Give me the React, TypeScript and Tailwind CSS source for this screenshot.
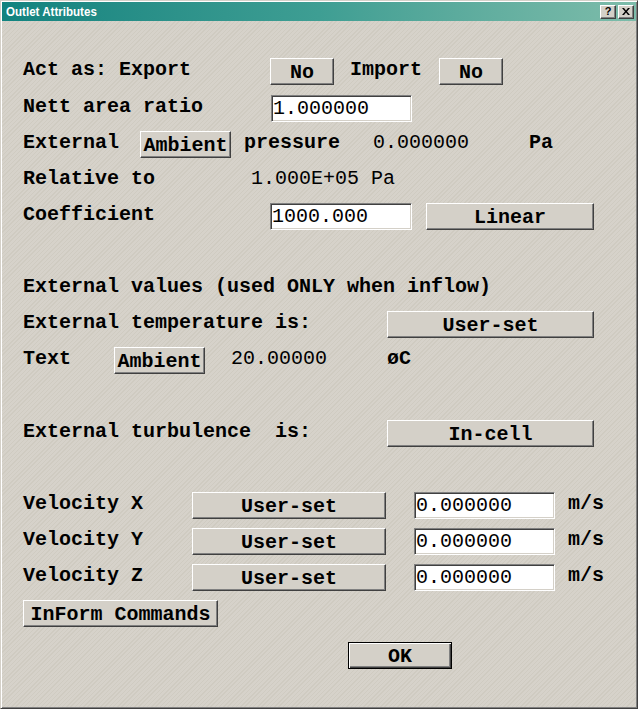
import React from "react";

const mono = "font-['Liberation_Mono','Courier_New',monospace]";

function Btn({ w, children, def = false, bold = true }: { w: number; children: React.ReactNode; def?: boolean; bold?: boolean }) {
  return (
    <div
      className={
        "h-[27px] shrink-0 flex items-center justify-center text-[20px] leading-[23px] text-black bg-[#d4d0c8] " +
        (bold ? "font-bold " : "") +
        (def
          ? "border border-black shadow-[inset_1px_1px_#ffffff,inset_-1px_-1px_#404040,inset_-2px_-2px_#808080]"
          : "border border-t-white border-l-white border-r-[#404040] border-b-[#404040] shadow-[inset_-1px_-1px_#808080]")
      }
      style={{ width: w }}
    >
      <span className="pt-[1px]">{children}</span>
    </div>
  );
}

function Input({ w, value }: { w: number; value: string }) {
  return (
    <div
      className="h-[27px] shrink-0 flex items-center bg-white border border-t-[#808080] border-l-[#808080] border-b-white border-r-white shadow-[inset_1px_1px_#404040,inset_-1px_-1px_#d4d0c8] pl-[1px] text-[20px] leading-[20px] text-black"
      style={{ width: w }}
    >
      {value}
    </div>
  );
}

function L({ w, children, normal = false }: { w?: number; children: React.ReactNode; normal?: boolean }) {
  return (
    <div
      className={"shrink-0 whitespace-pre text-[20px] leading-[23px] text-black " + (normal ? "font-normal" : "font-bold")}
      style={w ? { width: w } : undefined}
    >
      {children}
    </div>
  );
}

function Row({ mt, children }: { mt: number; children: React.ReactNode }) {
  return (
    <div className="flex items-start h-[27px]" style={{ marginTop: mt }}>
      {children}
    </div>
  );
}

export default function App() {
  return (
    <div
      className={
        "w-[638px] h-[709px] relative flex flex-col border border-t-[#d4d0c8] border-l-[#d4d0c8] border-r-[#404040] border-b-[#404040] shadow-[inset_1px_1px_#ffffff,inset_-1px_-1px_#808080] p-[1px] bg-[#d4d0c8] bg-[repeating-linear-gradient(135deg,#d6d2ca_0px,#d6d2ca_2px,#cfcbc1_2px,#cfcbc1_3px)] " +
        mono
      }
    >
      {/* title bar */}
      <div className="h-[19px] shrink-0 flex items-center bg-linear-to-r from-[#10837f] via-[#3e9e93] to-[#7dbcaa] pl-[4px] pr-[2px]">
        <span className="font-['Liberation_Sans',Arial,sans-serif] font-bold text-[13px] leading-[15px] text-white origin-left scale-x-[0.89] whitespace-nowrap">
          Outlet Attributes
        </span>
        <div className="ml-auto flex items-center gap-[2px]">
          <div className="w-[16px] h-[14px] bg-[#d4d0c8] border border-t-white border-l-white border-r-[#404040] border-b-[#404040] shadow-[inset_-1px_-1px_#808080] flex items-center justify-center font-['Liberation_Sans',Arial,sans-serif] font-bold text-[11px] leading-[11px] text-black">
            ?
          </div>
          <div className="w-[16px] h-[14px] bg-[#d4d0c8] border border-t-white border-l-white border-r-[#404040] border-b-[#404040] shadow-[inset_-1px_-1px_#808080] flex items-center justify-center">
            <svg width="8" height="7" viewBox="0 0 8 7">
              <path d="M0 0h2l2 2.5L6 0h2L5 3.5 8 7H6L4 4.5 2 7H0l3-3.5z" fill="#000" />
            </svg>
          </div>
        </div>
      </div>

      {/* content */}
      <div className="flex flex-col pl-[21px]">
        <Row mt={37}>
          <L w={247}>Act as: Export</L>
          <Btn w={64}>No</Btn>
          <div className="w-[16px]" />
          <L w={89}>Import</L>
          <Btn w={64}>No</Btn>
        </Row>
        <Row mt={10}>
          <L w={248}>Nett area ratio</L>
          <Input w={141} value="1.000000" />
        </Row>
        <Row mt={9}>
          <L w={117}>External</L>
          <Btn w={91}>Ambient</Btn>
          <div className="w-[13px]" />
          <L w={129}>pressure</L>
          <L w={156} normal>0.000000</L>
          <L>Pa</L>
        </Row>
        <Row mt={9}>
          <L w={228}>Relative to</L>
          <L normal>1.000E+05 Pa</L>
        </Row>
        <Row mt={9}>
          <L w={247}>Coefficient</L>
          <Input w={142} value="1000.000" />
          <div className="w-[14px]" />
          <Btn w={168}>Linear</Btn>
        </Row>
        <Row mt={45}>
          <L>External values (used ONLY when inflow)</L>
        </Row>
        <Row mt={9}>
          <L w={364}>External temperature is:</L>
          <Btn w={207}>User-set</Btn>
        </Row>
        <Row mt={9}>
          <L w={91}>Text</L>
          <Btn w={91}>Ambient</Btn>
          <div className="w-[26px]" />
          <L w={156} normal>20.00000</L>
          <L>øC</L>
        </Row>
        <Row mt={46}>
          <L w={364}>External turbulence  is:</L>
          <Btn w={207}>In-cell</Btn>
        </Row>
        {(["X", "Y", "Z"] as const).map((ax, i) => (
          <Row key={ax} mt={i === 0 ? 45 : 9}>
            <L w={169}>{"Velocity " + ax}</L>
            <Btn w={194}>User-set</Btn>
            <div className="w-[28px]" />
            <Input w={141} value="0.000000" />
            <div className="w-[13px]" />
            <L>m/s</L>
          </Row>
        ))}
        <Row mt={9}>
          <Btn w={195}>InForm Commands</Btn>
        </Row>
        <Row mt={15}>
          <div className="w-[325px]" />
          <Btn w={104} def>
            OK
          </Btn>
        </Row>
      </div>
    </div>
  );
}
